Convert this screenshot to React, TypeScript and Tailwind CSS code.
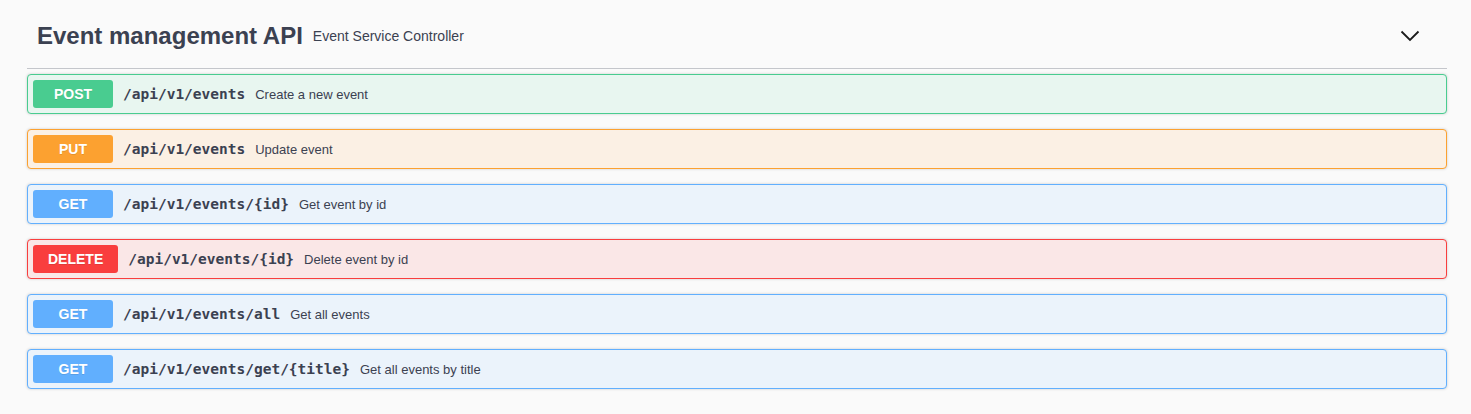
const ops = [
  { method: 'POST', path: '/api/v1/events', summary: 'Create a new event', box: 'border-[#49cc90] bg-[#e8f6f0]', badge: 'bg-[#49cc90]' },
  { method: 'PUT', path: '/api/v1/events', summary: 'Update event', box: 'border-[#fca130] bg-[#fbf0e4]', badge: 'bg-[#fca130]' },
  { method: 'GET', path: '/api/v1/events/{id}', summary: 'Get event by id', box: 'border-[#61affe] bg-[#ebf3fb]', badge: 'bg-[#61affe]' },
  { method: 'DELETE', path: '/api/v1/events/{id}', summary: 'Delete event by id', box: 'border-[#f93e3e] bg-[#fae7e7]', badge: 'bg-[#f93e3e]' },
  { method: 'GET', path: '/api/v1/events/all', summary: 'Get all events', box: 'border-[#61affe] bg-[#ebf3fb]', badge: 'bg-[#61affe]' },
  { method: 'GET', path: '/api/v1/events/get/{title}', summary: 'Get all events by title', box: 'border-[#61affe] bg-[#ebf3fb]', badge: 'bg-[#61affe]' },
];

function Chevron() {
  return (
    <svg width="20" height="12" viewBox="0 0 20 12" className="text-[#1b1b1b] mt-[1px]">
      <polyline points="1.5,1.5 10,10 18.5,1.5" fill="none" stroke="currentColor" strokeWidth="1.8" />
    </svg>
  );
}

export default function App() {
  return (
    <div className="w-[1471px] h-[414px] bg-[#fafafa] pl-[27px] pr-[24px] pt-[2px] font-['Liberation_Sans',Arial,sans-serif] text-[#3b4151]">
      {/* Tag header */}
      <div className="flex items-center h-[67px] border-b border-[#c4c6cb] pl-[10px] pr-[27px] mb-[5px]">
        <h3 className="text-[24px] font-bold leading-none pt-[2px]">Event management API</h3>
        <small className="flex-1 px-[10px] pt-[2px] text-[14px] font-normal">Event Service Controller</small>
        <Chevron />
      </div>

      {/* Operations */}
      <div className="flex flex-col gap-[15px]">
        {ops.map((op, i) => (
          <div
            key={i}
            className={`flex items-center h-[40px] p-[5px] border rounded-[4px] shadow-[0_0_3px_rgba(0,0,0,0.19)] ${op.box}`}
          >
            <span
              className={`min-w-[80px] px-[15px] py-[6px] rounded-[3px] text-center text-white text-[14px] font-bold leading-4 [text-shadow:0_1px_0_rgba(0,0,0,0.1)] ${op.badge}`}
            >
              {op.method}
            </span>
            <span className="px-[10px] pt-[2px] font-['DejaVu_Sans_Mono',monospace] font-bold text-[14.5px] text-[#3b4151]">
              {op.path}
            </span>
            <span className="pt-[2px] text-[13px] text-[#3b4151]">{op.summary}</span>
          </div>
        ))}
      </div>
    </div>
  );
}
